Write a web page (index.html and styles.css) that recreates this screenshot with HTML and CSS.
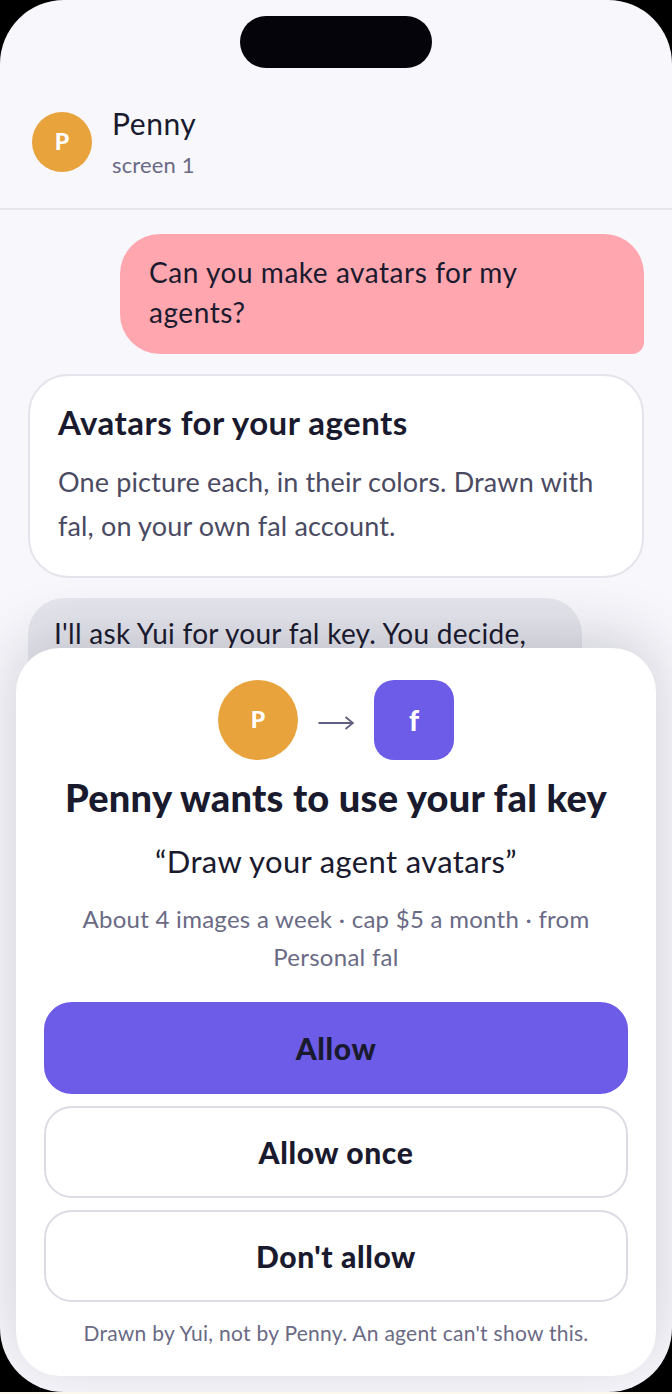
FILE: index.html
```html
<!DOCTYPE html>
<html lang="en">
<head>
<meta charset="utf-8">
<title>Penny</title>
<link rel="stylesheet" href="styles.css">
</head>
<body>
<div class="device">
  <div class="screen">
    <div class="island"></div>
    <header class="chat-header">
      <div class="avatar avatar-small">P</div>
      <div class="who">
        <div class="who-name">Penny</div>
        <div class="who-sub">screen 1</div>
      </div>
    </header>
    <main class="thread">
      <div class="bubble bubble-user">Can you make avatars for my agents?</div>
      <section class="card">
        <h2 class="card-title">Avatars for your agents</h2>
        <p class="card-body">One picture each, in their colors. Drawn with fal, on your own fal account.</p>
      </section>
      <div class="bubble bubble-agent">I'll ask Yui for your fal key. You decide, not me.</div>
    </main>
    <section class="sheet">
      <div class="sheet-icons">
        <div class="avatar avatar-large">P</div>
        <svg class="arrow" width="36" height="14" viewBox="0 0 36 14" aria-hidden="true"><path d="M0.5 7H35M27.5 1L35 7L27.5 13" fill="none" stroke="#5f5f80" stroke-width="1.8"/></svg>
        <div class="app-icon">f</div>
      </div>
      <h1 class="sheet-title">Penny wants to use your fal key</h1>
      <p class="sheet-quote">“Draw your agent avatars”</p>
      <p class="sheet-meta">About 4 images a week · cap $5 a month · from Personal fal</p>
      <div class="actions">
        <button class="action action-primary">Allow</button>
        <button class="action">Allow once</button>
        <button class="action">Don't allow</button>
      </div>
      <p class="sheet-note">Drawn by Yui, not by Penny. An agent can't show this.</p>
    </section>
  </div>
</div>
</body>
</html>
```

FILE: styles.css
```css
* { box-sizing: border-box; }
html, body { margin: 0; padding: 0; }
body {
  background: #fdf8ec;
  font-family: "Lato", "Noto Sans", sans-serif;
  color: #1a1a2e;
  height: 1394px;
  overflow: hidden;
}
.device { width: 672px; height: 1392px; background: #000; }
.screen {
  position: relative;
  width: 672px;
  height: 1392px;
  background: #f7f7fc;
  border-radius: 64px;
  overflow: hidden;
}
.island {
  position: absolute;
  top: 16px;
  left: 240px;
  width: 192px;
  height: 52px;
  border-radius: 26px;
  background: #04040a;
  z-index: 5;
}
.chat-header {
  display: flex;
  align-items: center;
  gap: 20px;
  padding: 112px 32px 36px;
  border-bottom: 2px solid #e6e6ec;
  height: 210px;
}
.avatar {
  display: flex;
  align-items: center;
  justify-content: center;
  flex: none;
  border-radius: 50%;
  background: #e8a33d;
  color: #fff;
  font-weight: 900;
  font-size: 23px;
}
.avatar-small { width: 60px; height: 60px; padding-bottom: 3px; }
.avatar-large { width: 80px; height: 80px; padding-bottom: 2px; }
.who { display: flex; flex-direction: column; }
.who-name { font-size: 30px; line-height: 40px; letter-spacing: .55px; }
.who-sub { font-size: 22px; line-height: 32px; margin-top: 6px; color: #6a6a85; letter-spacing: .15px; }
.thread { display: flex; flex-direction: column; gap: 20px; padding: 24px 28px 0; }
.bubble { font-size: 28px; line-height: 40px; }
.bubble-user {
  align-self: flex-end;
  width: 524px;
  padding: 18px 28px 22px 29px;
  background: #ffa6ae;
  border-radius: 40px 40px 12px 40px;
  letter-spacing: .55px;
}
.card {
  height: 204px;
  padding: 25px 28px;
  background: #fff;
  border: 2px solid #e4e4ec;
  border-radius: 40px;
}
.card-title { margin: 0 0 17px; font-size: 33px; line-height: 42px; font-weight: 700; letter-spacing: .48px; }
.card-body { margin: 0; font-size: 27px; line-height: 44px; color: #4a4a62; letter-spacing: .15px; }
.bubble-agent {
  width: 554px;
  padding: 15px 26px 17px;
  background: #e6e6ee;
  border-radius: 36px;
  letter-spacing: .28px;
}
.sheet {
  position: absolute;
  left: 16px;
  right: 16px;
  bottom: 16px;
  height: 728px;
  padding: 32px 28px 0;
  background: #fff;
  border-radius: 44px;
  box-shadow: 0 -12px 60px rgba(26,26,46,.18);
  text-align: center;
}
.sheet-icons { display: flex; align-items: center; justify-content: center; gap: 20px; height: 80px; }
.arrow { margin-top: 6px; }
.app-icon {
  display: flex;
  align-items: center;
  justify-content: center;
  width: 80px;
  height: 80px;
  border-radius: 20px;
  background: #6c5ce7;
  color: #fff;
  font-weight: 900;
  font-size: 28px;
}
.sheet-title { margin: 13px 0 0; font-size: 38px; line-height: 48px; font-weight: 900; letter-spacing: .26px; }
.sheet-quote { margin: 20px 0 0; font-size: 31px; line-height: 40px; letter-spacing: .36px; }
.sheet-meta { margin: 19px 0 0; padding: 0 24px; font-size: 24px; line-height: 38px; color: #6a6a85; letter-spacing: .27px; }
.actions { display: flex; flex-direction: column; gap: 12px; margin-top: 26px; }
.action {
  height: 92px;
  border: 2px solid #dcdce6;
  border-radius: 28px;
  background: #fff;
  color: #1a1a2e;
  font-family: inherit;
  font-size: 30px;
  font-weight: 900;
  letter-spacing: .6px;
}
.action-primary { background: #6c5ce7; border-color: #6c5ce7; }
.sheet-note { margin: 16px 0 0; font-size: 21px; line-height: 30px; color: #6a6a85; letter-spacing: .27px; }
```
